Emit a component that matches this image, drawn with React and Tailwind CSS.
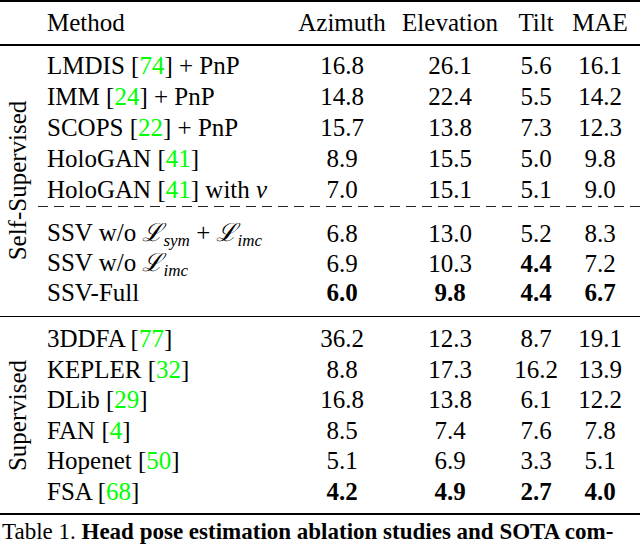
const cols = 'grid grid-cols-[260px_92px_124px_48px_80px] items-center';

const selfRows = [
  { m: ['LMDIS ', '74', ' + PnP'], v: ['16.8', '26.1', '5.6', '16.1'] },
  { m: ['IMM ', '24', ' + PnP'], v: ['14.8', '22.4', '5.5', '14.2'] },
  { m: ['SCOPS ', '22', ' + PnP'], v: ['15.7', '13.8', '7.3', '12.3'] },
  { m: ['HoloGAN ', '41', ''], v: ['8.9', '15.5', '5.0', '9.8'] },
  { m: ['HoloGAN ', '41', ' with', 'v'], v: ['7.0', '15.1', '5.1', '9.0'] },
];

const supRows = [
  { m: ['3DDFA ', '77'], v: ['36.2', '12.3', '8.7', '19.1'] },
  { m: ['KEPLER ', '32'], v: ['8.8', '17.3', '16.2', '13.9'] },
  { m: ['DLib ', '29'], v: ['16.8', '13.8', '6.1', '12.2'] },
  { m: ['FAN ', '4'], v: ['8.5', '7.4', '7.6', '7.8'] },
  { m: ['Hopenet ', '50'], v: ['5.1', '6.9', '3.3', '5.1'] },
  { m: ['FSA ', '68'], v: ['4.2', '4.9', '2.7', '4.0'], bold: [0, 1, 2, 3] },
];

function Cite({ n }) {
  return (
    <>
      [<span className="text-[#00ff00]">{n}</span>]
    </>
  );
}

function Values({ v, bold = [] }) {
  return v.map((x, i) => (
    <div key={i} className={`text-center ${bold.includes(i) ? 'font-bold' : ''}`}>{x}</div>
  ));
}

function Row({ r, h }) {
  return (
    <div className={`${cols} ${h}`}>
      <div className="pl-[11px] whitespace-nowrap">
        {r.m[0]}<Cite n={r.m[1]} />{r.m[2]}
        {r.m[3] && <> <i>{r.m[3]}</i></>}
      </div>
      <Values v={r.v} bold={r.bold} />
    </div>
  );
}

function Loss({ sub }) {
  return (
    <i>
      ℒ<span className="text-[17px] relative top-[5px]">{sub}</span>
    </i>
  );
}

function SideLabel({ children }) {
  return (
    <div className="w-[36px] flex items-center justify-center">
      <div className="-rotate-90 whitespace-nowrap leading-[29px]">{children}</div>
    </div>
  );
}

export default function App() {
  return (
    <div className="w-[640px] h-[546px] bg-white text-black overflow-hidden text-[25px] leading-[30px] font-['Liberation_Serif','Times_New_Roman','DejaVu_Serif',serif]">
      <div className="h-[2px] bg-black" />
      <div className="pt-[6px] pb-[6px] flex">
        <div className="w-[36px]" />
        <div className={`${cols} h-[30px]`}>
          <div className="pl-[11px]">Method</div>
          <div className="text-center">Azimuth</div>
          <div className="text-center">Elevation</div>
          <div className="text-center">Tilt</div>
          <div className="text-center">MAE</div>
        </div>
      </div>
      <div className="h-[1.5px] bg-black" />

      <div className="flex h-[270px]">
        <SideLabel>Self-Supervised</SideLabel>
        <div className="flex flex-col">
          <div className="pt-[5px]">
            {selfRows.map((r, i) => <Row key={i} r={r} h="h-[31px]" />)}
          </div>
          <div className="h-[1px] w-[604px] ml-[2px] bg-[repeating-linear-gradient(to_right,#222_0_10px,transparent_10px_16px)]" />
          <div className="pt-[11px]">
            <div className={`${cols} h-[30px]`}>
              <div className="pl-[11px] whitespace-nowrap">
                SSV w/o <Loss sub="sym" /> + <Loss sub="imc" />
              </div>
              <Values v={['6.8', '13.0', '5.2', '8.3']} />
            </div>
            <div className={`${cols} h-[30px]`}>
              <div className="pl-[11px] whitespace-nowrap">
                SSV w/o <Loss sub="imc" />
              </div>
              <Values v={['6.9', '10.3', '4.4', '7.2']} bold={[2]} />
            </div>
            <div className={`${cols} h-[30px]`}>
              <div className="pl-[11px]">SSV-Full</div>
              <Values v={['6.0', '9.8', '4.4', '6.7']} bold={[0, 1, 2, 3]} />
            </div>
          </div>
        </div>
      </div>
      <div className="h-[1.5px] bg-black" />

      <div className="flex h-[196px]">
        <SideLabel>Supervised</SideLabel>
        <div className="pt-[7px]">
          {supRows.map((r, i) => <Row key={i} r={r} h="h-[30.5px]" />)}
        </div>
      </div>
      <div className="h-[1.5px] bg-black" />

      <div className="pl-[2px] pt-[3px] text-[23px] leading-[28px] whitespace-nowrap">
        Table 1. <b>Head pose estimation ablation studies and SOTA com-</b>
      </div>
    </div>
  );
}
